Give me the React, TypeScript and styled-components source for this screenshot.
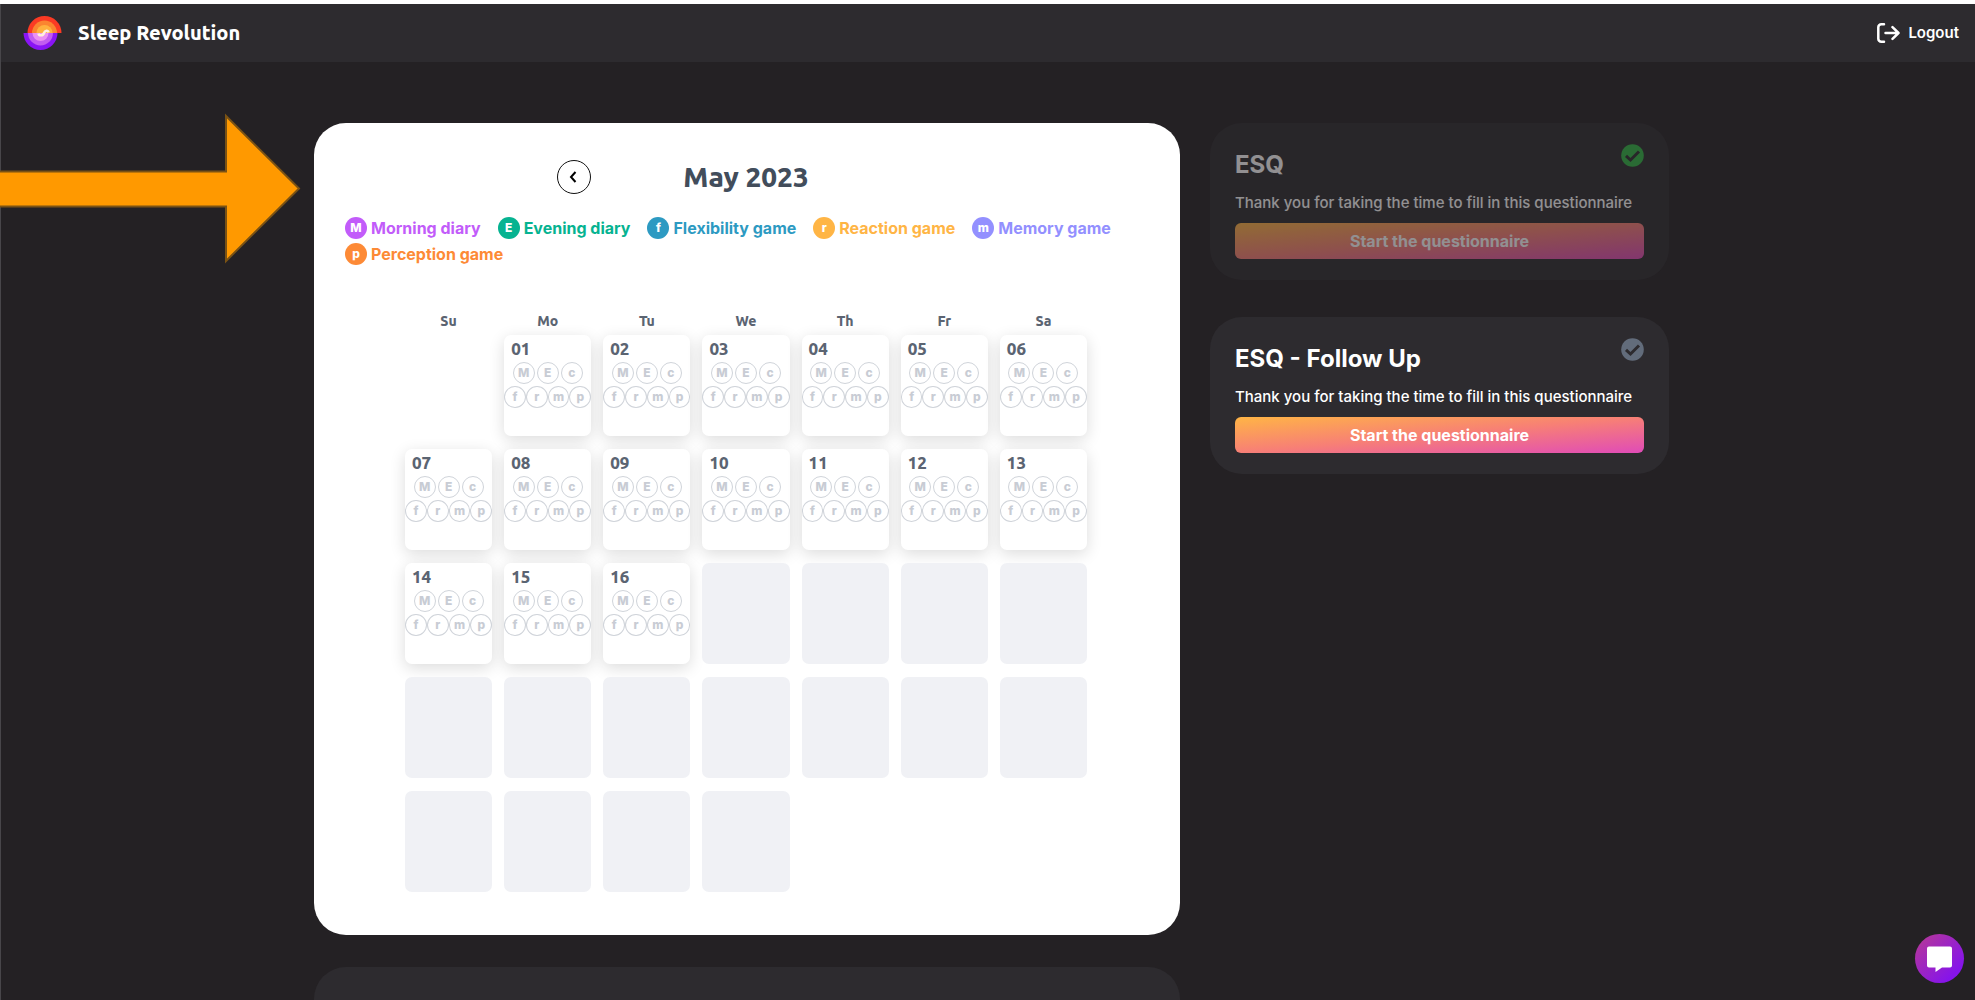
import React from "react";
import styled, { createGlobalStyle } from "styled-components";

const headingFont = `Ubuntu, "Noto Sans", sans-serif`;

const GlobalStyle = createGlobalStyle`
  *, *::before, *::after { box-sizing: border-box; }
  body {
    margin: 0;
    background: #242124;
    font-family: Inter, "Liberation Sans", sans-serif;
  }
  h1, h2, p, ul { margin: 0; padding: 0; }
  button { font-family: inherit; cursor: pointer; }
`;

const Shell = styled.div`
  position: relative;
  display: flex;
  flex-direction: column;
  height: 100vh;
  border-top: 4px solid #fff;
  overflow: hidden;
`;

const Header = styled.header`
  display: flex;
  align-items: center;
  justify-content: space-between;
  flex: none;
  height: 58px;
  padding: 0 16px 0 22px;
  border-left: 1px solid #48464a;
  background: #2d2b2f;
  color: #fff;
`;

const Brand = styled.a`
  display: flex;
  align-items: center;
  gap: 16px;
  color: inherit;
  text-decoration: none;
  font: 800 20px/28px ${headingFont};
`;

const LogoutButton = styled.button`
  display: flex;
  align-items: center;
  gap: 8px;
  padding: 0;
  border: 0;
  background: none;
  color: #fff;
  font-size: 15px;
  font-weight: 600;
  line-height: 24px;
`;

const Content = styled.main`
  flex: 1;
  min-height: 0;
  padding: 61px 0 32px;
  border-left: 1px solid #48464a;
  overflow-y: auto;
  scrollbar-width: none;
`;

const Columns = styled.div`
  display: grid;
  grid-template-columns: minmax(0, 866fr) minmax(0, 459fr);
  align-items: start;
  gap: 30px;
  max-width: 1362px;
  margin: 0 auto;
  padding-left: 7px;
`;

const MainColumn = styled.div`
  display: flex;
  flex-direction: column;
  gap: 32px;
`;

const SideColumn = styled.aside`
  display: flex;
  flex-direction: column;
  gap: 37px;
`;

const CalendarCard = styled.section`
  padding: 36px 33px 43px 31px;
  border-radius: 32px;
  background: #fff;
`;

const EmptyPanel = styled.section`
  min-height: 240px;
  border-radius: 32px;
  background: #2d2b2f;
`;

const MonthBar = styled.div`
  display: grid;
  grid-template-columns: 1fr auto 1fr;
  align-items: center;
  column-gap: 92px;
`;

const MonthTitle = styled.h1`
  color: #424d5b;
  font: 800 28px/36px ${headingFont};
`;

const RoundButton = styled.button`
  display: flex;
  align-items: center;
  justify-content: center;
  justify-self: end;
  width: 34px;
  height: 34px;
  padding: 0;
  border: 1px solid #111;
  border-radius: 50%;
  background: #fff;
  color: #000;
`;

const Legend = styled.ul`
  display: flex;
  flex-wrap: wrap;
  gap: 4px 17px;
  margin-top: 22px;
  list-style: none;
`;

const LegendItem = styled.li<{ $color: string }>`
  display: flex;
  align-items: center;
  gap: 4px;
  color: ${(p) => p.$color};
  font-size: 16px;
  font-weight: 700;
  line-height: 22px;
`;

const LegendBadge = styled.span<{ $color: string }>`
  display: flex;
  align-items: center;
  justify-content: center;
  width: 22px;
  height: 22px;
  border-radius: 50%;
  background: ${(p) => p.$color};
  color: #fff;
  font-size: 12px;
  font-weight: 800;
`;

const WeekdayRow = styled.div`
  display: grid;
  grid-template-columns: repeat(7, minmax(0, 1fr));
  column-gap: 12px;
  margin: 48px 60px 6px;
`;

const Weekday = styled.div`
  color: #5b6472;
  text-align: center;
  font: 800 14px/16px ${headingFont};
`;

const Calendar = styled.div`
  display: grid;
  grid-template-columns: repeat(7, minmax(0, 1fr));
  gap: 13px 12px;
  margin: 0 60px;
`;

const Blank = styled.div``;

const Day = styled.div`
  height: 101px;
  padding-top: 4px;
  border-radius: 7px;
  background: #fff;
  box-shadow: 0 4px 16px rgba(0, 0, 0, 0.14);
`;

const FutureDay = styled.div`
  height: 101px;
  border-radius: 7px;
  background: #f0f1f5;
`;

const DayNumber = styled.div`
  margin-bottom: 3px;
  padding-left: 7px;
  color: #5b6472;
  font: 800 17px/20px ${headingFont};
`;

const TaskRow = styled.div<{ $gap: number }>`
  display: flex;
  justify-content: center;
  gap: ${(p) => p.$gap}px;
  margin-bottom: 2px;
`;

const Task = styled.span`
  display: flex;
  align-items: center;
  justify-content: center;
  width: 22px;
  height: 22px;
  border: 1px solid #d0d4da;
  border-radius: 50%;
  color: #c8ccd4;
  font-size: 12px;
  font-weight: 800;
  line-height: 20px;
`;

const SurveyCard = styled.section<{ $done: boolean }>`
  position: relative;
  padding: 26px 25px 21px;
  border-radius: 32px;
  background: #2d2b2f;
  color: #fff;
  opacity: ${(p) => (p.$done ? 0.5 : 1)};
`;

const SurveyStatus = styled.span<{ $done: boolean }>`
  position: absolute;
  top: 21px;
  right: 25px;
  display: flex;
  color: ${(p) => (p.$done ? "#30b544" : "#626c7b")};
`;

const SurveyTitle = styled.h2`
  font-size: 24px;
  font-weight: 700;
  line-height: 32px;
`;

const SurveyText = styled.p`
  margin-top: 11px;
  font-size: 15px;
  font-weight: 500;
  line-height: 22px;
`;

const SurveyButton = styled.button`
  display: block;
  width: 100%;
  height: 36px;
  margin-top: 9px;
  padding: 0;
  border: 0;
  border-radius: 6px;
  background: linear-gradient(to bottom right, #ffb545, #f77f76 50%, #e04bb8);
  color: #fff;
  font-size: 16px;
  font-weight: 700;
  line-height: 20px;
`;

const ChatButton = styled.button`
  position: absolute;
  right: 11px;
  bottom: 17px;
  display: flex;
  align-items: center;
  justify-content: center;
  width: 49px;
  height: 49px;
  padding: 0;
  border: 0;
  border-radius: 50%;
  background: linear-gradient(135deg, #b93a92, #8614ea 80%);
`;

const Pointer = styled.svg`
  position: absolute;
  top: 109px;
  left: 0;
  pointer-events: none;
`;

const legend = [
  { code: "M", label: "Morning diary", color: "#c25cfa" },
  { code: "E", label: "Evening diary", color: "#06b391" },
  { code: "f", label: "Flexibility game", color: "#2d9ac2" },
  { code: "r", label: "Reaction game", color: "#ffb545" },
  { code: "m", label: "Memory game", color: "#9390ff" },
  { code: "p", label: "Perception game", color: "#fd8a36" },
];

const weekdays = ["Su", "Mo", "Tu", "We", "Th", "Fr", "Sa"];
const diaryTasks = ["M", "E", "c"];
const gameTasks = ["f", "r", "m", "p"];
const days = Array.from({ length: 31 }, (_, i) => i + 1);
const today = 16;

const surveys = [
  { title: "ESQ", done: true },
  { title: "ESQ - Follow Up", done: false },
];

function Logo() {
  return (
    <svg width="39" height="34" viewBox="0 0 39 34" aria-hidden="true">
      <path d="M4.500 17a17 17 0 0 1 34 0z" fill="#fb3a24" />
      <path d="M9 17a12.500 12.500 0 0 1 25 0z" fill="#fb8530" />
      <path d="M13.500 17a8 8 0 0 1 16 0z" fill="#ffb23e" />
      <path d="M.5 17a17 17 0 0 0 34 0z" fill="#8a14f5" />
      <path d="M5 17a12.500 12.500 0 0 0 25 0z" fill="#c25cf0" />
      <path d="M9.500 17a8 8 0 0 0 16 0z" fill="#ec90f2" />
      <path
        d="M15.500 17.500c.5 2.500 4.500 2.500 5.500-.5s4-3 4.500-.5"
        fill="none"
        stroke="#fff0dc"
        strokeWidth="2.600"
      />
    </svg>
  );
}

function LogoutIcon() {
  return (
    <svg width="23" height="20" viewBox="0 0 23 20" fill="none" stroke="#fff" strokeWidth="2.500" strokeLinecap="round" strokeLinejoin="round" aria-hidden="true">
      <path d="M7 1.300H4.300a3 3 0 0 0-3 3v11.400a3 3 0 0 0 3 3H7" />
      <path d="M8.500 10h13M15.500 4.200l6 5.800-6 5.800" />
    </svg>
  );
}

function CheckIcon() {
  return (
    <svg width="23" height="23" viewBox="0 0 23 23" aria-hidden="true">
      <circle cx="11.500" cy="11.500" r="11.300" fill="currentColor" />
      <path d="M5 11.800l4.500 4.200 8.500-8.500" fill="none" stroke="#2d2b2f" strokeWidth="3" />
    </svg>
  );
}

export default function App() {
  return (
    <>
      <GlobalStyle />
      <Shell>
        <Header>
          <Brand href="#">
            <Logo />
            Sleep Revolution
          </Brand>
          <LogoutButton type="button">
            <LogoutIcon />
            Logout
          </LogoutButton>
        </Header>
        <Content>
          <Columns>
            <MainColumn>
              <CalendarCard>
                <MonthBar>
                  <RoundButton type="button" aria-label="Previous month">
                    <svg width="12" height="14" viewBox="0 0 12 14" fill="none" stroke="currentColor" strokeWidth="2" aria-hidden="true">
                      <path d="M7.500 2L3 7l4.500 5" />
                    </svg>
                  </RoundButton>
                  <MonthTitle>May 2023</MonthTitle>
                </MonthBar>
                <Legend>
                  {legend.map((item) => (
                    <LegendItem key={item.code} $color={item.color}>
                      <LegendBadge $color={item.color}>{item.code}</LegendBadge>
                      {item.label}
                    </LegendItem>
                  ))}
                </Legend>
                <WeekdayRow>
                  {weekdays.map((name) => (
                    <Weekday key={name}>{name}</Weekday>
                  ))}
                </WeekdayRow>
                <Calendar>
                  <Blank />
                  {days.map((day) =>
                    day <= today ? (
                      <Day key={day}>
                        <DayNumber>{String(day).padStart(2, "0")}</DayNumber>
                        <TaskRow $gap={2}>
                          {diaryTasks.map((task) => (
                            <Task key={task}>{task}</Task>
                          ))}
                        </TaskRow>
                        <TaskRow $gap={0}>
                          {gameTasks.map((task) => (
                            <Task key={task}>{task}</Task>
                          ))}
                        </TaskRow>
                      </Day>
                    ) : (
                      <FutureDay key={day} />
                    )
                  )}
                </Calendar>
              </CalendarCard>
              <EmptyPanel />
            </MainColumn>
            <SideColumn>
              {surveys.map((survey) => (
                <SurveyCard key={survey.title} $done={survey.done}>
                  <SurveyStatus $done={survey.done}>
                    <CheckIcon />
                  </SurveyStatus>
                  <SurveyTitle>{survey.title}</SurveyTitle>
                  <SurveyText>Thank you for taking the time to fill in this questionnaire</SurveyText>
                  <SurveyButton type="button" disabled={survey.done}>
                    Start the questionnaire
                  </SurveyButton>
                </SurveyCard>
              ))}
            </SideColumn>
          </Columns>
        </Content>
        <Pointer width="301" height="152" viewBox="0 0 301 152" aria-hidden="true">
          <path d="M-4 58.500H226V3l73 72.500-73 72.500V93.500H-4z" fill="#ff9900" stroke="#7a5214" strokeWidth="2" />
        </Pointer>
        <ChatButton type="button" aria-label="Open chat">
          <svg width="26" height="26" viewBox="0 0 26 26" aria-hidden="true">
            <path d="M2 .5h21a2 2 0 0 1 2 2v17a2 2 0 0 1-2 2h-8l-6.500 4.500v-4.500H2a2 2 0 0 1-2-2v-17a2 2 0 0 1 2-2z" fill="#fff" />
          </svg>
        </ChatButton>
      </Shell>
    </>
  );
}
